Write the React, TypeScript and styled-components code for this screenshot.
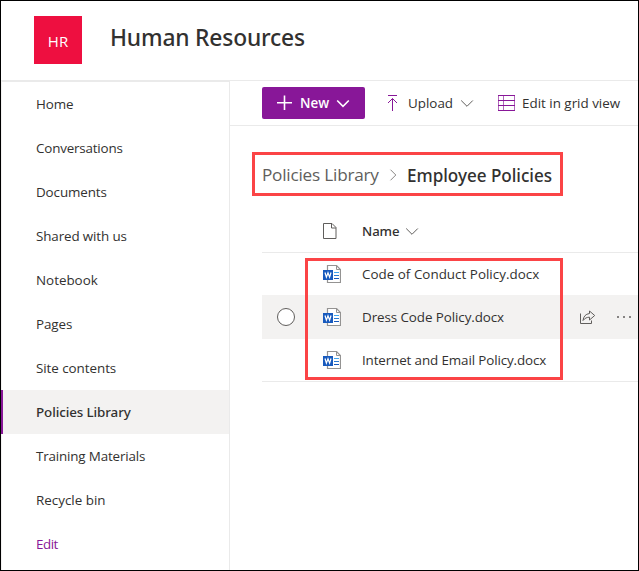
import React from 'react';
import styled, { createGlobalStyle } from 'styled-components';

const Global = createGlobalStyle`
  * { box-sizing: border-box; }
  body { margin: 0; background: #fff; }
  svg { display: block; flex: none; }
`;

const purple = '#881798';
const line = '#eaeaea';

const Page = styled.div`
  width: 639px;
  height: 571px;
  border: 1px solid #000;
  display: flex;
  flex-direction: column;
  overflow: hidden;
  background: #fff;
  color: #323130;
  font: 400 13.4px 'Open Sans', sans-serif;
  white-space: nowrap;
`;

const Header = styled.header`
  height: 79px;
  flex: none;
  display: flex;
  padding: 15px 0 0 33px;
`;

const Logo = styled.div`
  width: 48px;
  height: 48px;
  background: #ee0f40;
  color: #fff;
  display: flex;
  align-items: center;
  justify-content: center;
  font-size: 15px;
  padding-top: 2px;
`;

const Title = styled.h1`
  margin: 6px 0 0 28px;
  font: 500 22.8px/32px 'Noto Sans', sans-serif;
  letter-spacing: -0.18px;
`;

const Body = styled.div`
  flex: 1;
  display: flex;
  min-height: 0;
`;

const Sidebar = styled.nav`
  width: 229px;
  flex: none;
  border-top: 2px solid ${line};
  border-right: 1px solid ${line};
  border-left: 1px solid #f3f2f1;
`;

const NavItem = styled.a<{ $active?: boolean; $accent?: boolean; $track?: number }>`
  display: flex;
  align-items: center;
  height: 44px;
  margin-left: -1px;
  padding-left: ${p => (p.$active ? 33 : 35)}px;
  border-left: ${p => (p.$active ? `2px solid ${purple}` : '0')};
  background: ${p => (p.$active ? '#f3f2f1' : 'transparent')};
  color: ${p => (p.$accent ? purple : 'inherit')};
  font-family: ${p => (p.$active ? "'Noto Sans'" : "'Open Sans'")}, sans-serif;
  font-weight: ${p => (p.$active ? 500 : 400)};
  letter-spacing: ${p => p.$track ?? 0}px;
`;

const Main = styled.main`
  flex: 1;
  min-width: 0;
  border-top: 1px solid ${line};
`;

const CommandBar = styled.div`
  height: 45px;
  display: flex;
  align-items: center;
  border-bottom: 1px solid ${line};
  padding-left: 32px;
`;

const NewButton = styled.button`
  width: 103px;
  height: 32px;
  border: 0;
  border-radius: 2px;
  padding: 0 0 0 15px;
  background: ${purple};
  color: #fff;
  display: flex;
  align-items: center;
  font: 600 13.4px 'Open Sans', sans-serif;
`;

const NewLabel = styled.span`
  margin: 0 7px 0 7px;
`;

const Command = styled.div<{ $left: number; $gap: number; $track: number }>`
  display: flex;
  align-items: center;
  margin-left: ${p => p.$left}px;
  gap: ${p => p.$gap}px;
  letter-spacing: ${p => p.$track}px;
`;

const UploadLabel = styled.span`
  margin: 0 -3px 0 0;
`;

const Breadcrumb = styled.div`
  width: 311px;
  height: 44px;
  margin: 26px 0 0 22px;
  border: 3px solid #fb4446;
  display: flex;
  align-items: center;
  padding: 1px 0 0 7px;
`;

const Crumb = styled.span`
  width: 127px;
  color: #605e5c;
  font-size: 17.2px;
  letter-spacing: -0.22px;
`;

const CurrentCrumb = styled.span`
  margin: 1px 0 0 10px;
  font: 500 17.1px 'Noto Sans', sans-serif;
  letter-spacing: -0.02px;
`;

const FileList = styled.section`
  position: relative;
  margin-left: 32px;
`;

const ListHeader = styled.div`
  height: 57px;
  padding: 14px 0 0 61px;
  border-bottom: 1px solid ${line};
  display: flex;
  align-items: center;
`;

const NameLabel = styled.span`
  margin: 0 6px 0 25px;
  font: 500 13.2px 'Noto Sans', sans-serif;
  letter-spacing: -0.1px;
`;

const Row = styled.div<{ $hover?: boolean }>`
  height: ${p => (p.$hover ? 44 : 42)}px;
  display: flex;
  align-items: center;
  padding-left: 15px;
  background: ${p => (p.$hover ? '#f3f2f1' : 'transparent')};
`;

const Rows = styled.div`
  border-bottom: 1px solid ${line};
`;

const Radio = styled.span<{ $shown?: boolean }>`
  width: 18px;
  height: 18px;
  border: 1px solid #605e5c;
  border-radius: 50%;
  background: #fff;
  visibility: ${p => (p.$shown ? 'visible' : 'hidden')};
`;

const IconCell = styled.span`
  margin-left: 28px;
  width: 39px;
`;

const FileName = styled.span<{ $track: number }>`
  width: 217px;
  letter-spacing: ${p => p.$track}px;
`;

const RowActions = styled.span`
  display: flex;
  align-items: center;
  gap: 21px;
`;

const Highlight = styled.div`
  position: absolute;
  left: 43px;
  top: 62px;
  width: 258px;
  height: 122px;
  border: 3px solid #fb4446;
`;

const Chevron = ({ color, width = 1 }: { color: string; width?: number }) => (
  <svg width="14" height="9" viewBox="0 0 14 9" fill="none" stroke={color} strokeWidth={width}>
    <path d="M1.2 1.5 7 7.3 12.8 1.5" />
  </svg>
);

const WordIcon = () => (
  <svg width="18" height="18" viewBox="0 0 18 18">
    <path d="M4.5 0.5H13.5L17.5 4.5V17.5H4.5Z" fill="#fff" stroke="#949392" strokeWidth="1.2" />
    <path d="M13.5 0.5V4.5H17.5" fill="none" stroke="#949392" />
    <path d="M11 7.5H16" stroke="#41a5ee" />
    <path d="M11 10.5H16" stroke="#2b7cd3" />
    <path d="M11 13.5H16" stroke="#185abd" />
    <path d="M0 5H10V15H0Z" fill="#185abd" />
    <path d="M2 7.5 3.4 12.2 5 7.8 6.6 12.2 8 7.5" fill="none" stroke="#fff" strokeWidth="1.2" />
  </svg>
);

const files = [
  { name: 'Code of Conduct Policy.docx', track: 0.02 },
  { name: 'Dress Code Policy.docx', track: -0.08, hover: true },
  { name: 'Internet and Email Policy.docx', track: -0.12 },
];

const links = [
  { label: 'Home', track: -0.1 },
  { label: 'Conversations', track: -0.18 },
  { label: 'Documents', track: -0.1 },
  { label: 'Shared with us', track: -0.12 },
  { label: 'Notebook' },
  { label: 'Pages', track: -0.1 },
  { label: 'Site contents', track: -0.05 },
  { label: 'Policies Library', active: true, track: -0.1 },
  { label: 'Training Materials', track: -0.16 },
  { label: 'Recycle bin' },
  { label: 'Edit', accent: true, track: -0.5 },
];

export default function App() {
  return (
    <>
      <Global />
      <Page>
        <Header>
          <Logo>HR</Logo>
          <Title>Human Resources</Title>
        </Header>
        <Body>
          <Sidebar>
            {links.map(l => (
              <NavItem key={l.label} $active={l.active} $accent={l.accent} $track={l.track}>{l.label}</NavItem>
            ))}
          </Sidebar>
          <Main>
            <CommandBar>
              <NewButton>
                <svg width="16" height="16" viewBox="0 0 16 16" stroke="#fff" strokeWidth="1.6">
                  <path d="M7.5 0.5V15M0 7.8H15" />
                </svg>
                <NewLabel>New</NewLabel>
                <Chevron color="#fff" width={1.6} />
              </NewButton>
              <Command $left={22} $gap={10} $track={0}>
                <svg width="11" height="16" viewBox="0 0 11 16" fill="none" stroke={purple}>
                  <path d="M1 0.5H10M5.5 16V3.5M1 8 5.5 3.5 10 8" />
                </svg>
                <UploadLabel>Upload</UploadLabel>
                <Chevron color="#605e5c" />
              </Command>
              <Command $left={23.5} $gap={7.5} $track={0}>
                <svg width="17" height="16" viewBox="0 0 17 16" fill="none" stroke={purple}>
                  <path d="M0 0.5H17M0 15.5H17M0 5.5H17M0 10.5H17" />
                  <path d="M0.5 0V16M16.5 0V16M5.5 0V16" strokeOpacity=".65" />
                </svg>
                Edit in grid view
              </Command>
            </CommandBar>
            <Breadcrumb>
              <Crumb>Policies Library</Crumb>
              <svg width="8" height="12" viewBox="0 0 8 12" fill="none" stroke="#8a8886">
                <path d="M1.5 0.7 6.8 6 1.5 11.3" />
              </svg>
              <CurrentCrumb>Employee Policies</CurrentCrumb>
            </Breadcrumb>
            <FileList>
              <ListHeader>
                <svg width="14" height="16" viewBox="0 0 14 16" fill="none" stroke="#605e5c">
                  <path d="M0.5 0.5H9L13 4.5V15.5H0.5ZM8.5 0.5V5H13" />
                </svg>
                <NameLabel>Name</NameLabel>
                <Chevron color="#605e5c" />
              </ListHeader>
              <Rows>
                {files.map(f => (
                  <Row key={f.name} $hover={f.hover}>
                    <Radio $shown={f.hover} />
                    <IconCell><WordIcon /></IconCell>
                    <FileName $track={f.track}>{f.name}</FileName>
                    {f.hover && (
                      <RowActions>
                        <svg width="17" height="15" viewBox="0 0 17 15" fill="none" stroke="#605e5c">
                          <path d="M1.5 3.5V13.5H12.5V10.5" />
                          <path d="M10.5 1V3.5C6.5 4 4.5 6.5 4 10.5C6 8 8 7.2 10.5 7.2V10L15.7 5.5Z" />
                        </svg>
                        <svg width="16" height="4" viewBox="0 0 16 4" fill="#605e5c">
                          <circle cx="1" cy="2" r="1" /><circle cx="7" cy="2" r="1" /><circle cx="13" cy="2" r="1" />
                        </svg>
                      </RowActions>
                    )}
                  </Row>
                ))}
              </Rows>
              <Highlight />
            </FileList>
          </Main>
        </Body>
      </Page>
    </>
  );
}
